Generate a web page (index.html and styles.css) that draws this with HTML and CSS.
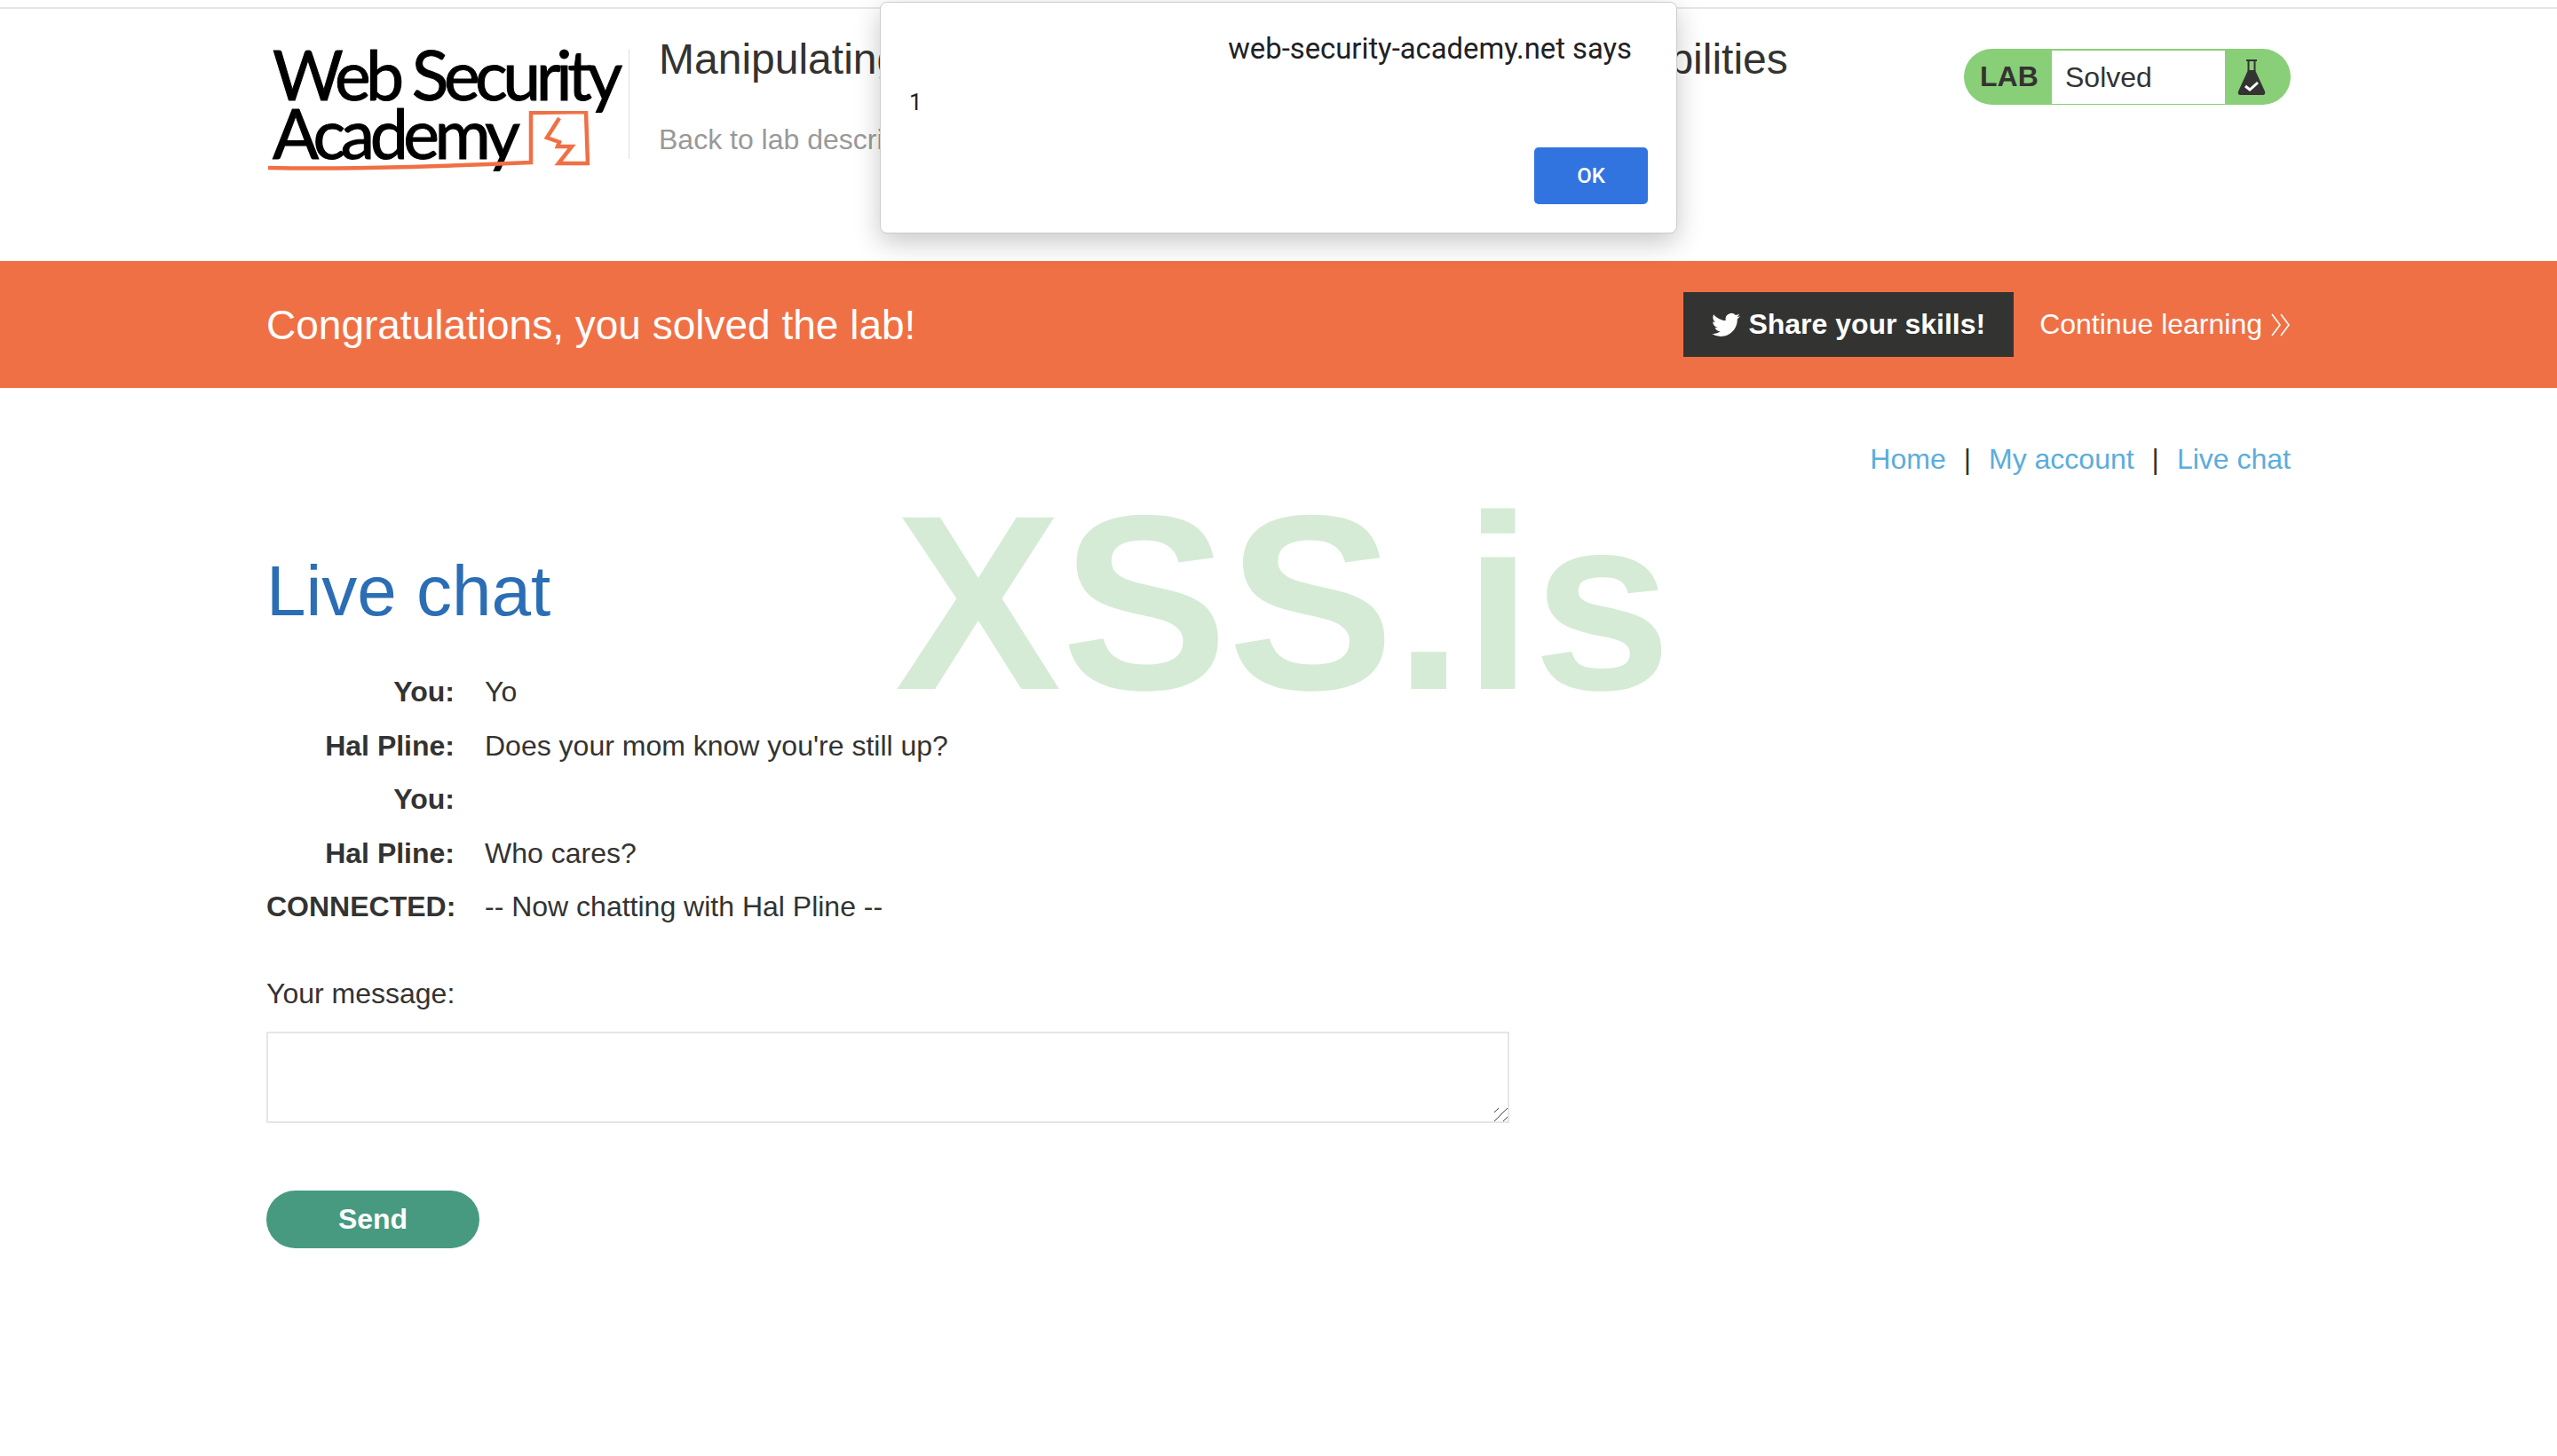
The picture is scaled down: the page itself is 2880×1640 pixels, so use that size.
FILE: index.html
```html
<!DOCTYPE html>
<html lang="en">
<head>
    <meta charset="UTF-8">
    <title>Live chat</title>
    <link rel="stylesheet" href="styles.css">
</head>
<body>
    <div class="top-line"></div>
    <header class="lab-header">
        <div class="wrapper header-row">
            <div class="logo">
                <span class="logo-line">Web Security</span>
                <span class="logo-line">Academy</span>
                <svg class="logo-mark" viewBox="0 0 362 68" width="362" height="68">
                    <path d="M0 64 C100 66 200 62 296 58 L296 2 L358 1 L360 59 L327 59 L342 40 L326 40 L328 35 L314 30 L328 8" fill="none" stroke="#f07045" stroke-width="4.5"/>
                </svg>
            </div>
            <div class="lab-title">
                <h2>Manipulating WebSocket messages to exploit vulnerabilities</h2>
                <a class="back-link" href="#">Back to lab description</a>
            </div>
            <div class="lab-status">
                <span class="lab-tag">LAB</span>
                <span class="lab-state">Solved</span>
                <span class="lab-flask">
                    <svg viewBox="0 0 32 40" width="32" height="40">
                        <path d="M10 1 H22 M12.5 2 V13 M19.5 2 V13" fill="none" stroke="#333332" stroke-width="2"/>
                        <path d="M12 12 H20 L31 36 Q32 40 28 40 H4 Q0 40 1 36 Z" fill="#333332"/>
                        <path d="M9 30 L14 34 L23 26" fill="none" stroke="#fff" stroke-width="3"/>
                    </svg>
                </span>
            </div>
        </div>
    </header>
    <section class="banner">
        <div class="wrapper banner-row">
            <h4>Congratulations, you solved the lab!</h4>
            <a class="share-btn" href="#">
                <svg viewBox="0 0 24 24" width="32" height="32"><path fill="#fff" d="M23.953 4.57a10 10 0 01-2.825.775 4.958 4.958 0 002.163-2.723c-.951.555-2.005.959-3.127 1.184a4.92 4.92 0 00-8.384 4.482C7.69 8.095 4.067 6.13 1.64 3.162a4.822 4.822 0 00-.666 2.475c0 1.71.87 3.213 2.188 4.096a4.904 4.904 0 01-2.228-.616v.06a4.923 4.923 0 003.946 4.827 4.996 4.996 0 01-2.212.085 4.936 4.936 0 004.604 3.417 9.867 9.867 0 01-6.102 2.105c-.39 0-.779-.023-1.17-.067a13.995 13.995 0 007.557 2.209c9.053 0 13.998-7.496 13.998-13.985 0-.21 0-.42-.015-.63A9.935 9.935 0 0024 4.59z"/></svg>
                Share your skills!
            </a>
            <a class="continue-link" href="#">
                Continue learning
                <svg viewBox="0 0 22 26" width="22" height="26"><path d="M1 1 L10 13 L1 25 M11 1 L20 13 L11 25" fill="none" stroke="#fff" stroke-width="1.6"/></svg>
            </a>
        </div>
    </section>
    <main class="wrapper content">
        <nav class="top-links">
            <a href="#">Home</a><span class="sep">|</span><a href="#">My account</a><span class="sep">|</span><a href="#">Live chat</a>
        </nav>
        <h1>Live chat</h1>
        <div class="chat">
            <div class="chat-row"><strong>You:</strong><span>Yo</span></div>
            <div class="chat-row"><strong>Hal Pline:</strong><span>Does your mom know you're still up?</span></div>
            <div class="chat-row"><strong>You:</strong><span></span></div>
            <div class="chat-row"><strong>Hal Pline:</strong><span>Who cares?</span></div>
            <div class="chat-row"><strong>CONNECTED:</strong><span>-- Now chatting with Hal Pline --</span></div>
        </div>
        <form class="chat-form">
            <label for="message">Your message:</label>
            <textarea id="message"></textarea>
            <button type="submit">Send</button>
        </form>
    </main>
    <div class="watermark">XSS.is</div>
    <div class="alert-box">
        <p class="alert-origin">web-security-academy.net says</p>
        <p class="alert-text">1</p>
        <div class="alert-actions"><button class="alert-ok">OK</button></div>
    </div>
</body>
</html>
```

FILE: styles.css
```css
body {
    font-family: "Liberation Sans", Arial, sans-serif;
    margin: 0;
    background: #fff;
    color: #333332;
    font-size: 32px;
    min-height: 1640px;
}
a {
    text-decoration: none;
}
.top-line {
    margin-top: 8px;
    height: 2px;
    background: #e6e6e6;
}
.wrapper {
    width: 2280px;
    margin: 0 auto;
}
.lab-header {
    height: 284px;
}
.header-row {
    display: flex;
    align-items: flex-start;
}
.logo {
    position: relative;
    width: 409px;
    height: 124px;
    margin-top: 45px;
    border-right: 1px solid #ddd;
    flex-shrink: 0;
    font-family: Lato, sans-serif;
    color: #000;
    font-size: 77px;
    line-height: 66px;
    letter-spacing: -5.5px;
    padding-left: 7px;
    box-sizing: border-box;
    -webkit-text-stroke: 1px #000;
}
.logo-line {
    display: block;
    white-space: nowrap;
    position: relative;
    top: -5px;
}
.logo-mark {
    position: absolute;
    left: 2px;
    top: 70px;
}
.lab-title {
    margin-left: 33px;
    width: 1400px;
}
.lab-title h2 {
    margin: 27px 0 0;
    font-size: 48px;
    font-weight: 400;
    line-height: 60px;
}
.back-link {
    display: block;
    margin-top: 42px;
    color: #999;
    font-size: 32px;
    line-height: 36px;
}
.lab-status {
    margin-top: 45px;
    margin-left: auto;
    width: 368px;
    height: 63px;
    display: flex;
    align-items: center;
    background: #88cf78;
    border-radius: 32px;
}
.lab-tag {
    width: 99px;
    padding-left: 18px;
    box-sizing: border-box;
    font-weight: 700;
}
.lab-state {
    width: 195px;
    height: 60px;
    line-height: 60px;
    padding-left: 15px;
    box-sizing: border-box;
    background: #fff;
}
.lab-flask {
    display: flex;
    padding-left: 14px;
}
.banner {
    height: 143px;
    background: #f07045;
    color: #fff;
}
.banner-row {
    display: flex;
    align-items: center;
    height: 143px;
}
.banner h4 {
    margin: 0 auto 0 0;
    font-size: 46px;
    font-weight: 400;
}
.share-btn {
    display: flex;
    align-items: center;
    gap: 9px;
    height: 73px;
    padding: 0 32px;
    background: #333332;
    color: #fff;
    font-weight: 700;
    font-size: 32px;
}
.continue-link {
    display: flex;
    align-items: center;
    gap: 10px;
    margin-left: 29px;
    color: #fff;
    font-size: 32px;
}
.top-links {
    display: flex;
    justify-content: flex-end;
    margin-top: 62px;
    line-height: 36px;
    font-size: 32px;
}
.top-links a {
    color: #5aaddd;
}
.sep {
    margin: 0 20px;
}
h1 {
    margin: 81px 0 0;
    font-size: 80px;
    line-height: 100px;
    font-weight: 400;
    color: #2b6eb5;
}
.chat {
    margin-top: 33px;
}
.chat-row {
    display: grid;
    grid-template-columns: 212px 1fr;
    column-gap: 34px;
    height: 60.6px;
    line-height: 60px;
}
.chat-row strong {
    text-align: right;
}
.chat-form {
    margin-top: 49px;
}
.chat-form label {
    display: block;
    line-height: 36px;
}
.chat-form textarea {
    display: block;
    width: 1400px;
    height: 103px;
    margin-top: 25px;
    box-sizing: border-box;
    border: 2px solid #e6e6e6;
}
.chat-form textarea::-webkit-resizer {
    background: repeating-linear-gradient(135deg, transparent 0 3px, #444 3px 4px, transparent 4px 7px);
}
.chat-form button {
    display: block;
    width: 240px;
    height: 65px;
    margin-top: 76px;
    border: none;
    border-radius: 33px;
    background: #479a80;
    color: #fff;
    font-family: inherit;
    font-weight: 700;
    font-size: 32px;
}
.watermark {
    position: absolute;
    left: 1008px;
    top: 519px;
    font-size: 281px;
    font-weight: 700;
    line-height: 320px;
    color: #d5ebd6;
    pointer-events: none;
}
.alert-box {
    position: absolute;
    left: 991px;
    top: 2px;
    width: 898px;
    height: 261px;
    box-sizing: border-box;
    padding: 34px 32px 32px 32px;
    background: #fff;
    border-radius: 8px;
    border: 1px solid #ccc;
    box-shadow: 0 10px 30px rgba(0, 0, 0, 0.22);
    font-family: Roboto, sans-serif;
    color: #202124;
}
.alert-origin {
    margin: 0;
    padding-right: 18px;
    font-size: 32.8px;
    line-height: 36px;
    text-align: right;
}
.alert-text {
    margin: 25px 0 0;
    font-size: 26px;
    line-height: 34px;
}
.alert-actions {
    display: flex;
    justify-content: flex-end;
    margin-top: 34px;
}
.alert-ok {
    width: 128px;
    height: 64px;
    border: none;
    border-radius: 5px;
    background: #3174e0;
    color: #fff;
    font-family: inherit;
    font-weight: 500;
    font-size: 24px;
}
```
